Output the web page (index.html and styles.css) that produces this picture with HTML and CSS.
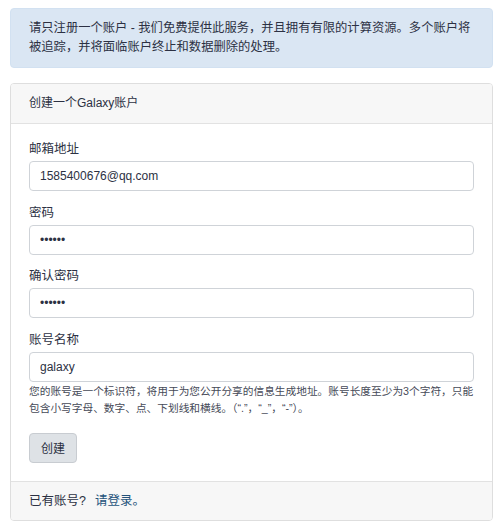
FILE: index.html
```html
<!DOCTYPE html>
<html lang="zh">
<head>
<meta charset="utf-8">
<link rel="stylesheet" href="styles.css">
</head>
<body>
<div class="page">
  <div class="alert">请只注册一个账户 - 我们免费提供此服务，并且拥有有限的计算资源。多个账户将被追踪，并将面临账户终止和数据删除的处理。</div>
  <div class="card">
    <div class="card-header">创建一个Galaxy账户</div>
    <form class="card-body">
      <div class="group">
        <label class="label">邮箱地址</label>
        <input class="input" type="text" value="1585400676@qq.com">
      </div>
      <div class="group">
        <label class="label">密码</label>
        <input class="input" type="password" value="123456">
      </div>
      <div class="group">
        <label class="label">确认密码</label>
        <input class="input" type="password" value="123456">
      </div>
      <div class="group last">
        <label class="label">账号名称</label>
        <input class="input" type="text" value="galaxy">
        <div class="help">您的账号是一个标识符，将用于为您公开分享的信息生成地址。账号长度至少为3个字符，只能包含小写字母、数字、点、下划线和横线。（“.”，“_”，“-”）。</div>
      </div>
      <button class="btn" type="button">创建</button>
    </form>
    <div class="card-footer">已有账号?<a class="link" href="#">请登录。</a></div>
  </div>
</div>
</body>
</html>
```

FILE: styles.css
```css
html, body {
  margin: 0;
  padding: 0;
  background: #ffffff;
}
body {
  font-family: "Liberation Sans", "Noto Sans CJK SC", sans-serif;
  font-size: 12px;
  line-height: 19px;
  color: #2c3143;
}
.page {
  padding: 8px 7px 0 10px;
}
.alert {
  background: #dae6f3;
  border: 1px solid #d2e1f1;
  border-radius: 4px;
  padding: 10px 18px 10px 18px;
  font-size: 12.3px;
  color: #2c3143;
}
.card {
  margin-top: 15px;
  border: 1px solid #dedede;
  border-radius: 4px;
  overflow: hidden;
}
.card-header {
  background: #f7f7f7;
  border-bottom: 1px solid #e2e2e2;
  padding: 10px 18px 10px 18px;
}
.card-body {
  margin: 0;
  padding: 16px 18px 18px 18px;
  background: #ffffff;
}
.group {
  margin-bottom: 12.5px;
}
.group.last {
  margin-bottom: 16px;
}
.label {
  display: block;
  margin-bottom: 2px;
  font-size: 12.5px;
}
.input {
  display: block;
  box-sizing: border-box;
  width: 100%;
  height: 30px;
  margin: 0;
  padding: 0 10px;
  border: 1px solid #cfd3d8;
  border-radius: 4px;
  font-family: "Liberation Sans", "Noto Sans CJK SC", sans-serif;
  font-size: 12px;
  color: #2c3143;
  background: #ffffff;
}
.help {
  margin-top: 1px;
  font-size: 10.7px;
  line-height: 17px;
  color: #464a57;
}
.btn {
  display: block;
  box-sizing: border-box;
  height: 30px;
  padding: 0 11px;
  border: 1px solid #c8ccd1;
  border-radius: 4px;
  background: #dee2e6;
  font-family: "Liberation Sans", "Noto Sans CJK SC", sans-serif;
  font-size: 12px;
  color: #2c3143;
}
.card-footer {
  background: #f7f7f7;
  border-top: 1px solid #e2e2e2;
  padding: 10px 18px 9px 18px;
  font-size: 12.5px;
}
.link {
  margin-left: 9px;
  color: #25537b;
  text-decoration: none;
}
```
